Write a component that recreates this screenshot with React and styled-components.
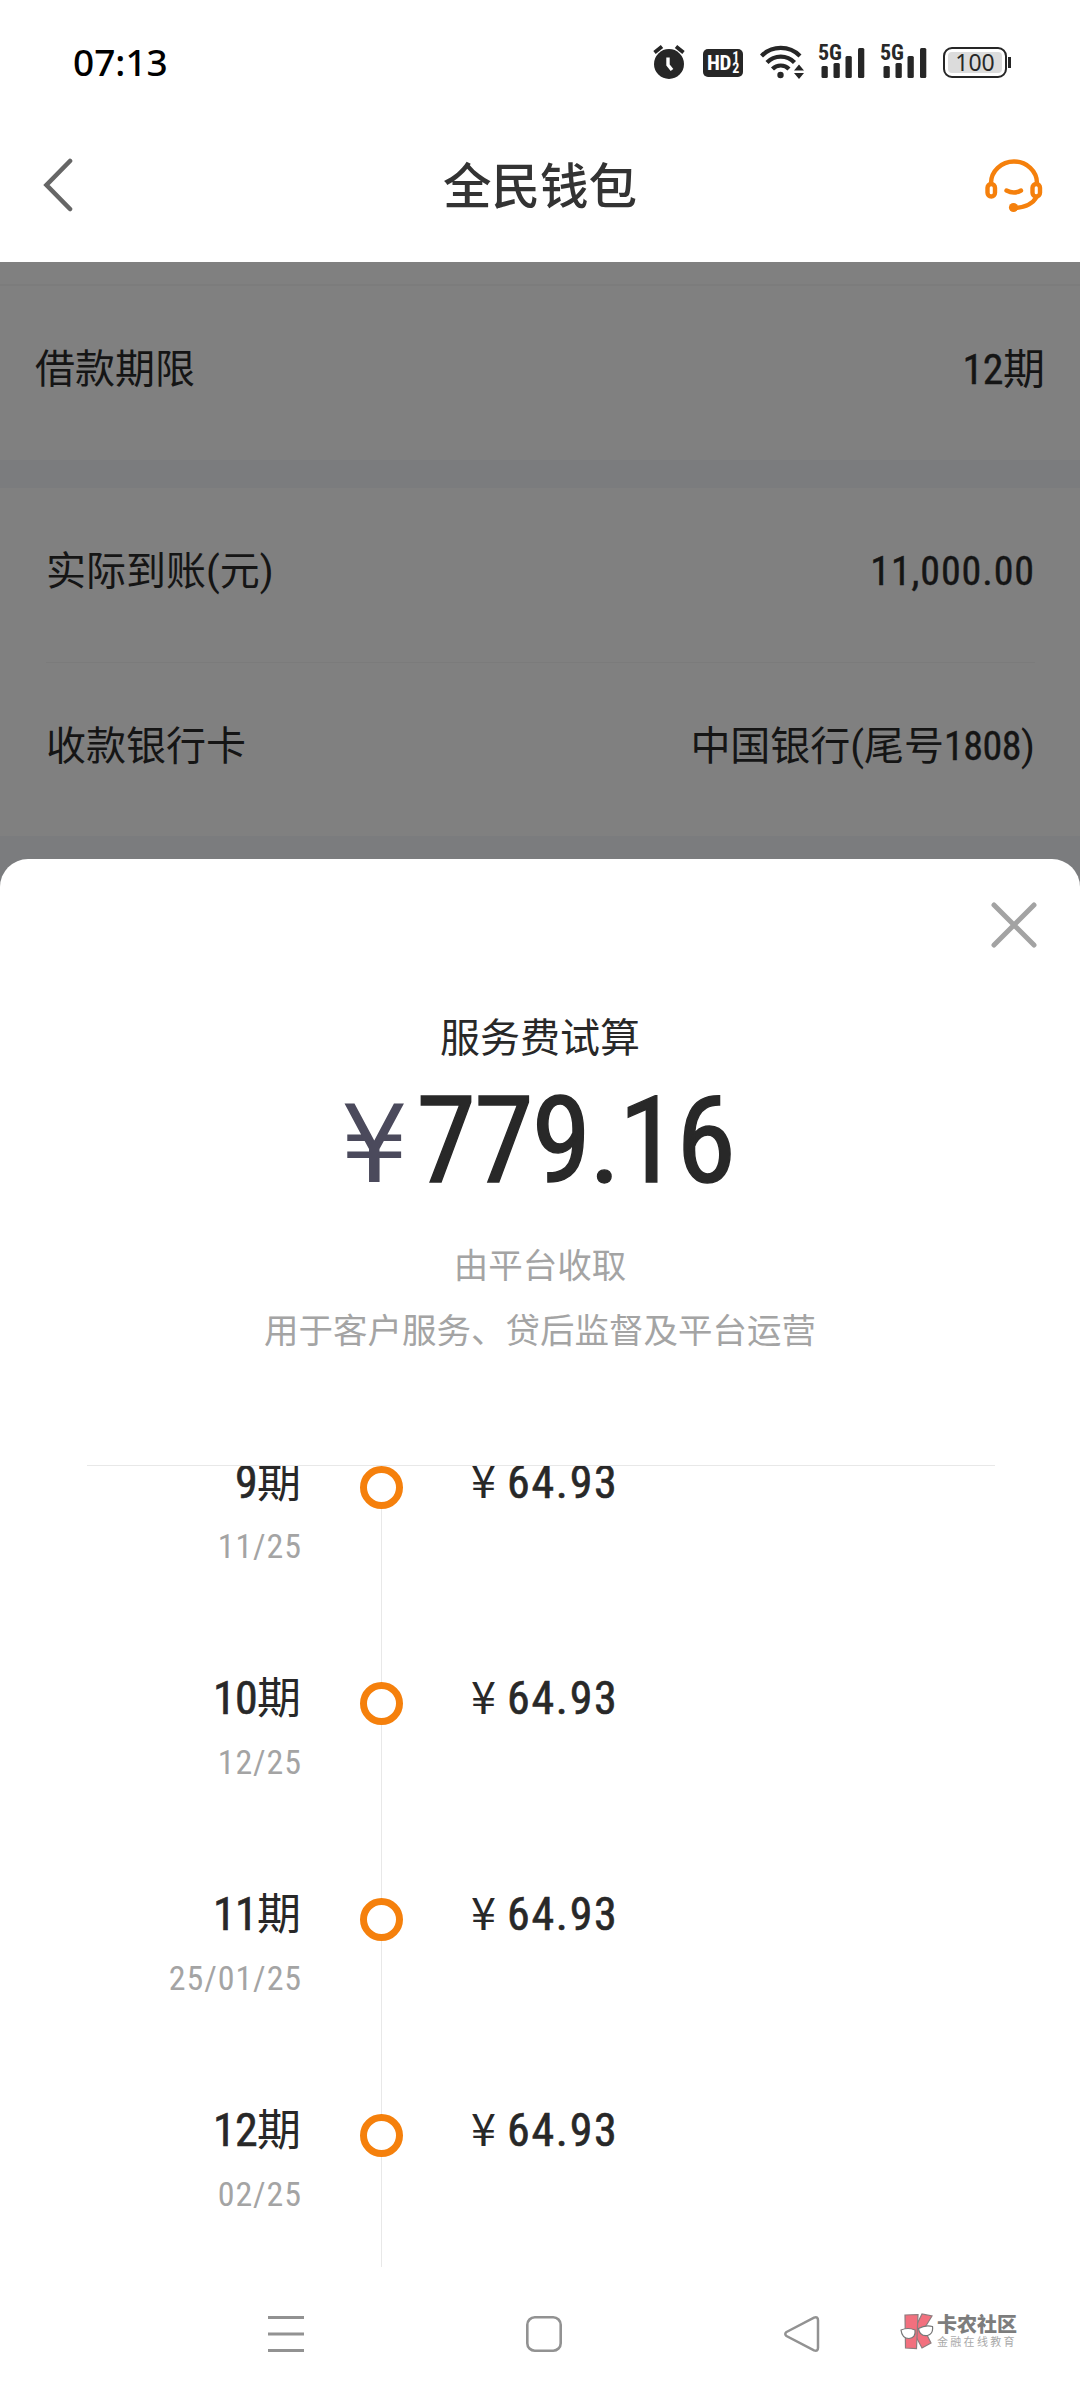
import React from "react";
import styled, { createGlobalStyle } from "styled-components";

const colors = {
  primary: "#f5800c",
  text: "#282828",
  muted: "#a4a4a4",
  line: "#e8e8e8",
};

const details = [
  { label: "实际到账(元)", value: "11,000.00" },
  { label: "收款银行卡", value: "中国银行(尾号1808)" },
];

const schedule = [
  { period: "9", date: "11/25", amount: "64.93" },
  { period: "10", date: "12/25", amount: "64.93" },
  { period: "11", date: "25/01/25", amount: "64.93" },
  { period: "12", date: "02/25", amount: "64.93" },
];

const AlarmIcon = () => (
  <svg width="32" height="36" viewBox="0 0 32 36">
    <circle cx="16" cy="20" r="15" fill="#262626" />
    <path d="M1.5 8.5 9 2.5M30.5 8.5 23 2.5" stroke="#262626" strokeWidth="3.8" />
    <path d="M15 13.5v7.5l4 5" stroke="#fff" strokeWidth="3.4" fill="none" />
  </svg>
);

const WifiIcon = () => (
  <svg width="44" height="36" viewBox="0 0 44 36">
    <g fill="none" stroke="#262626" strokeWidth="4.2">
      <path d="M1.5 12a27 27 0 0 1 38.5 0" />
      <path d="M7 18.5a19 19 0 0 1 27.5 0" />
      <path d="M12.5 25a11.5 11.5 0 0 1 16.5 0" />
    </g>
    <circle cx="20.5" cy="31" r="3.2" fill="#262626" />
    <path d="M34 26.5l5-6 5 6zM34 29l5 6 5-6z" fill="#262626" />
  </svg>
);

const BarsIcon = () => (
  <svg width="48" height="36" viewBox="0 0 48 36">
    <g fill="#262626">
      <rect x="3.5" y="22" width="6.3" height="12" rx="1.5" />
      <rect x="15.5" y="19" width="6.3" height="15" rx="1.5" />
      <rect x="27.5" y="12" width="6.3" height="22" rx="1.5" />
      <rect x="40" y="4" width="6.3" height="30" rx="1.5" />
    </g>
  </svg>
);

const BackIcon = () => (
  <svg width="32" height="56" viewBox="0 0 32 56">
    <path
      d="M28 3 4.5 27 28 51"
      fill="none"
      stroke="#666"
      strokeWidth="4.6"
      strokeLinecap="round"
    />
  </svg>
);

const ServiceIcon = () => (
  <svg width="58" height="54" viewBox="0 0 58 54">
    <g fill="none" stroke={colors.primary} strokeWidth="4.4" strokeLinecap="round">
      <path d="M6 24.5V24a23 21.5 0 0 1 46 0v.5" />
      <rect x="2.5" y="25" width="7.5" height="12.5" rx="3.7" />
      <rect x="47.5" y="25" width="7.5" height="12.5" rx="3.7" />
      <path d="M21.5 31.5q7.5 4 14.5 0" />
      <path d="M51.5 38q-5 9.500-21 11" />
    </g>
    <circle cx="28.5" cy="48.5" r="4.6" fill={colors.primary} />
  </svg>
);

const CloseIcon = () => (
  <svg width="46" height="46" viewBox="0 0 46 46">
    <path
      d="M3 3 43 43M43 3 3 43"
      stroke="#a3a3a3"
      strokeWidth="5"
      strokeLinecap="round"
    />
  </svg>
);

const MenuIcon = () => (
  <svg width="36" height="38" viewBox="0 0 36 38">
    <path d="M0 2.5h36M0 19h36M0 35.5h36" stroke="#929292" strokeWidth="3" />
  </svg>
);

const HomeIcon = () => (
  <svg width="36" height="36" viewBox="0 0 36 36">
    <rect
      x="1.3"
      y="1.3"
      width="33.4"
      height="33.4"
      rx="7.5"
      fill="none"
      stroke="#929292"
      strokeWidth="2.6"
    />
  </svg>
);

const ReturnIcon = () => (
  <svg width="36" height="36" viewBox="0 0 36 36">
    <path
      d="M2.5 16 30 1.7q4-1.500 4 2.500v27.600q0 4-4 2.500L2.5 20q-2.500-2 0-4z"
      fill="none"
      stroke="#929292"
      strokeWidth="2.5"
    />
  </svg>
);

const KIcon = () => (
  <svg width="34" height="37" viewBox="0 0 34 37">
    <g fill="#f2707e" stroke="#8d7c7e" strokeWidth="1.2">
      <path d="M15 15 22 1l10 2-8 13 7 14-9 5-8-15z" />
      <path d="M5 2l13-.5-1.500 34-11-.5z" />
    </g>
    <g fill="#fff" stroke="#777" strokeWidth="1.2">
      <path d="M1 17q7-3 14 0 1 8-6 8.500-7 0-8-8.500z" />
      <path d="M18.500 15.500q7-4 14-2 1 7.500-5 9-8 1-9-7z" />
    </g>
  </svg>
);

// digits are set heavier and narrower than the Chinese text
const Mixed = ({ text }) =>
  text
    .split(/([\d,.]+)/)
    .map((part, i) =>
      i % 2 ? (
        <Num key={i} $tight={!part.includes(".")}>
          {part}
        </Num>
      ) : (
        part
      )
    );

const App = () => {
  return (
    <>
      <GlobalStyle />
      <Screen>
        <StatusBar>
          <Clock>07:13</Clock>
          <StatusIcons>
            <AlarmIcon />
            <HdBadge>
              HD
              <HdSims>
                <span>1</span>
                <span>2</span>
              </HdSims>
            </HdBadge>
            <WifiIcon />
            <Signal>
              <BarsIcon />
              <Network>5G</Network>
            </Signal>
            <Signal>
              <BarsIcon />
              <Network>5G</Network>
            </Signal>
            <Battery>100</Battery>
          </StatusIcons>
        </StatusBar>
        <Header>
          <BackIcon />
          <Title>全民钱包</Title>
          <ServiceIcon />
        </Header>

        <Backdrop>
          <TermRow>
            <span>借款期限</span>
            <TermValue>
              <Mixed text="12期" />
            </TermValue>
          </TermRow>
          <Details>
            {details.map((item) => (
              <DetailRow key={item.label}>
                <span>{item.label}</span>
                <span>
                  <Mixed text={item.value} />
                </span>
              </DetailRow>
            ))}
          </Details>
        </Backdrop>

        <Sheet>
          <SheetTop>
            <CloseIcon />
          </SheetTop>
          <SheetTitle>服务费试算</SheetTitle>
          <Total>
            <Yen>¥</Yen>
            <TotalValue>779.16</TotalValue>
          </Total>
          <Note>由平台收取</Note>
          <Note>用于客户服务、贷后监督及平台运营</Note>
          <Timeline>
            {schedule.map((item) => (
              <Step key={item.period}>
                <StepInfo>
                  <Period>
                    <PeriodNum>{item.period}</PeriodNum>期
                  </Period>
                  <StepDate>{item.date}</StepDate>
                </StepInfo>
                <Track>
                  <Ring />
                  <TrackLine />
                </Track>
                <Amount>
                  <AmountYen>¥</AmountYen>
                  <AmountValue>{item.amount}</AmountValue>
                </Amount>
              </Step>
            ))}
          </Timeline>
        </Sheet>

        <NavBar>
          <NavKeys>
            <MenuIcon />
            <HomeIcon />
            <ReturnIcon />
          </NavKeys>
          <Brand>
            <KIcon />
            <BrandText>
              <BrandName>卡农社区</BrandName>
              <BrandSlogan>金融在线教育</BrandSlogan>
            </BrandText>
          </Brand>
        </NavBar>
      </Screen>
    </>
  );
};

export default App;

const GlobalStyle = createGlobalStyle`
  * {
    box-sizing: border-box;
  }

  body {
    margin: 0;
    background: #fff;
    font-family: Roboto, "Noto Sans CJK SC", sans-serif;
    color: ${colors.text};
  }

  svg {
    display: block;
    flex-shrink: 0;
  }
`;

const Num = styled.span`
  font-stretch: 75%;
  letter-spacing: ${({ $tight }) => ($tight ? "-0.5px" : "0.9px")};
  -webkit-text-stroke: 0.4px currentColor;
`;

const Screen = styled.div`
  display: flex;
  flex-direction: column;
  width: 1080px;
  height: 2400px;
  overflow: hidden;
`;

const StatusBar = styled.div`
  display: flex;
  justify-content: space-between;
  align-items: center;
  height: 124px;
  padding: 0 73px 0 73px;
`;

const Clock = styled.div`
  padding-bottom: 2px;
  font-family: "Noto Sans", sans-serif;
  font-size: 37px;
  font-weight: 500;
  color: #000;
`;

const StatusIcons = styled.div`
  display: flex;
  align-items: center;
`;

const HdBadge = styled.div`
  display: flex;
  align-items: center;
  justify-content: center;
  width: 40px;
  height: 28px;
  margin: 2px 17px 0 18px;
  border-radius: 5px;
  background: #262626;
  color: #fff;
  font-size: 21px;
  font-weight: 700;
  font-stretch: 75%;
  letter-spacing: -0.2px;
`;

const HdSims = styled.div`
  display: flex;
  flex-direction: column;
  margin-left: 1px;
  font-size: 14px;
  line-height: 11px;
`;

const Signal = styled.div`
  position: relative;
  margin-left: 14px;
`;

const Network = styled.div`
  position: absolute;
  top: 0;
  left: 0;
  padding-right: 2px;
  background: #fff;
  font-size: 22px;
  font-weight: 700;
  font-stretch: 75%;
  line-height: 17px;
`;

const Battery = styled.div`
  position: relative;
  display: flex;
  align-items: center;
  justify-content: center;
  width: 64px;
  height: 31px;
  margin-left: 15px;
  border: 2px solid #262626;
  border-radius: 9px;
  background: #dcdcdc;
  box-shadow: inset 0 0 0 3px #fff;
  font-family: "Noto Sans", sans-serif;
  font-size: 23px;

  &::after {
    content: "";
    position: absolute;
    right: -6px;
    top: 8px;
    width: 3px;
    height: 11px;
    background: #262626;
  }
`;

const Header = styled.div`
  display: grid;
  grid-template-columns: 1fr auto 1fr;
  align-items: center;
  height: 138px;
  padding: 0 37px 14px;

  svg:first-child {
    margin-left: 5px;
  }

  svg:last-child {
    justify-self: end;
  }
`;

const Title = styled.div`
  padding-top: 4px;
  font-size: 48.5px;
  font-weight: 500;
  line-height: 60px;
  color: #333;
`;

const Backdrop = styled.div`
  height: 637px;
  padding-top: 22px;
  background: linear-gradient(#808080 100px, #7b7c7e 100px);
  color: #151515;
`;

const TermRow = styled.div`
  display: flex;
  justify-content: space-between;
  align-items: center;
  height: 176px;
  padding: 0 35px 4px;
  background: #808080;
  font-size: 40px;
  line-height: 60px;
  box-shadow: inset 0 2px 0 #7c7c7c;
`;

const TermValue = styled.span`
  font-size: 42px;
`;

const Details = styled.div`
  margin-top: 28px;
  padding: 0 45px 0 46px;
  background: #808080;
`;

const DetailRow = styled.div`
  display: flex;
  justify-content: space-between;
  align-items: center;
  height: 174px;
  padding-bottom: 6px;
  font-size: 40px;
  line-height: 60px;

  & + & {
    border-top: 1px solid #7b7b7b;
  }
`;

const Sheet = styled.div`
  display: flex;
  flex-direction: column;
  height: 1408px;
  margin-top: -40px;
  border-radius: 28px 28px 0 0;
  background: #fff;
`;

const SheetTop = styled.div`
  display: flex;
  justify-content: flex-end;
  padding: 43px 43px 0 0;
  height: 150px;
`;

const SheetTitle = styled.div`
  height: 60px;
  font-size: 40px;
  line-height: 60px;
  text-align: center;
`;

const Total = styled.div`
  display: flex;
  justify-content: center;
  align-items: baseline;
  height: 165px;
  padding-right: 6px;
  line-height: 144px;
`;

const Yen = styled.span`
  margin-right: 8px;
  color: #4b4a5c;
  font-family: "DejaVu Sans", sans-serif;
  font-size: 107px;
`;

const TotalValue = styled.span`
  font-size: 121px;
  font-weight: 400;
  font-stretch: 75%;
  letter-spacing: -2.2px;
  -webkit-text-stroke: 1.4px currentColor;
`;

const Note = styled.div`
  color: ${colors.muted};
  font-size: 34.5px;
  line-height: 65px;
  text-align: center;
`;

const Timeline = styled.div`
  flex: 1;
  margin: 101px 85px 0 87px;
  border-top: 1px solid ${colors.line};
  overflow: hidden;
`;

const Step = styled.div`
  display: flex;
  height: 216px;
`;

const StepInfo = styled.div`
  width: 215px;
  text-align: right;
`;

const Period = styled.div`
  margin-top: -14px;
  padding-right: 1px;
  font-size: 44px;
  line-height: 60px;
`;

const PeriodNum = styled.span`
  font-size: 46px;
  font-stretch: 75%;
  letter-spacing: -0.7px;
  -webkit-text-stroke: 0.6px currentColor;
`;

const StepDate = styled.div`
  margin-top: 13px;
  color: ${colors.muted};
  font-size: 34px;
  font-stretch: 75%;
  letter-spacing: 0.9px;
  line-height: 40px;
`;

const Track = styled.div`
  display: flex;
  flex-direction: column;
  align-items: center;
  width: 43px;
  margin: 0 68px 0 58px;
`;

const Ring = styled.div`
  width: 43px;
  height: 43px;
  border: 7px solid ${colors.primary};
  border-radius: 50%;
`;

const TrackLine = styled.div`
  flex: 1;
  width: 1px;
  background: ${colors.line};
`;

const Amount = styled.div`
  margin-top: -14px;
  font-size: 46px;
  line-height: 60px;
`;

const AmountYen = styled.span`
  margin-right: 11px;
  font-family: "Noto Sans CJK SC", sans-serif;
  font-size: 45px;
  line-height: 1;
`;

const AmountValue = styled.span`
  font-stretch: 75%;
  letter-spacing: 1.7px;
  -webkit-text-stroke: 0.6px currentColor;
`;

const NavBar = styled.div`
  display: flex;
  align-items: center;
  height: 133px;
  padding-left: 268px;
`;

const NavKeys = styled.div`
  display: flex;
  align-items: center;
  gap: 222px;
  margin-right: 80px;
`;

const Brand = styled.div`
  display: flex;
  gap: 3px;
  margin-top: -5px;
`;

const BrandText = styled.div`
  padding-top: 1px;
  color: #7d7d7d;
`;

const BrandName = styled.div`
  font-size: 20px;
  font-weight: 900;
  line-height: 22px;
`;

const BrandSlogan = styled.div`
  color: #aaa;
  font-size: 11px;
  line-height: 14px;
  letter-spacing: 2.3px;
`;
